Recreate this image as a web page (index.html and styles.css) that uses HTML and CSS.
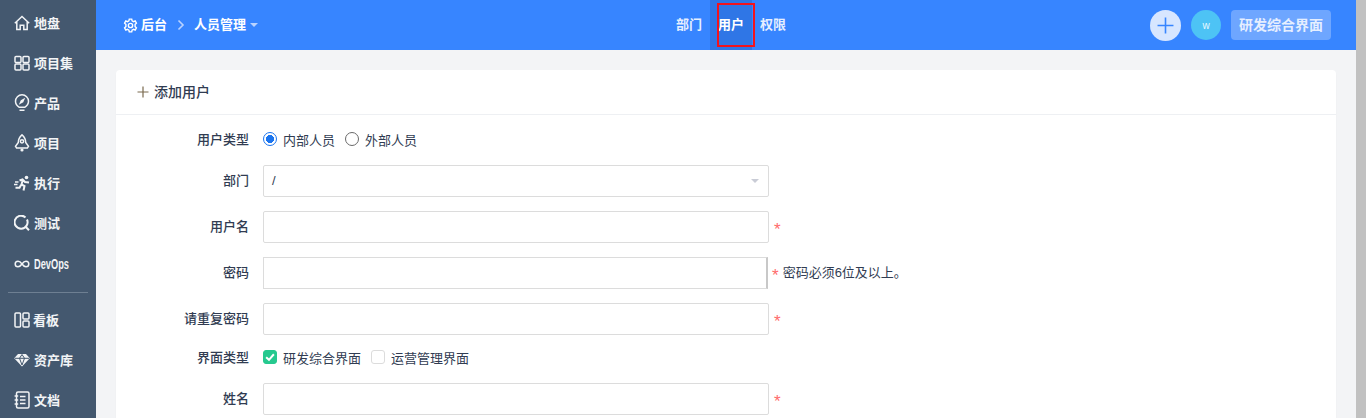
FILE: index.html
```html
<!DOCTYPE html>
<html lang="zh">
<head>
<meta charset="utf-8">
<title>添加用户</title>
<link rel="stylesheet" href="styles.css">
</head>
<body>
<div class="app">
  <aside class="side">
    <a class="nav"><svg viewBox="0 0 16 16"><path d="M.8 8.200 8 1.500 15.200 8.200M2.800 6.500V14.500H6.200V10.200H9.800V14.500H13.200V6.500"/></svg><span>地盘</span></a>
    <a class="nav"><svg viewBox="0 0 16 16"><rect x="1" y="1.500" width="6" height="6" rx="1"/><rect x="9" y="1.500" width="6" height="6" rx="1"/><rect x="1" y="9" width="6" height="6" rx="1"/><rect x="9" y="9" width="6" height="6" rx="1"/></svg><span>项目集</span></a>
    <a class="nav"><svg class="tall" viewBox="0 0 16 18"><path d="M5.300 13.300C3.100 12 1.500 10 1.500 7.300a6.500 6.500 0 0 1 13 0c0 2.700-1.600 4.700-3.800 6ZM5.500 16.300H10.500"/><path class="fill" d="M11.200 3.800 6.800 6.200 4.800 10.800 9.300 8.300Z"/></svg><span>产品</span></a>
    <a class="nav"><svg class="tall" viewBox="0 0 16 18"><path d="M8 .8C5.300 3 4.300 5.800 4.300 8.500L1.500 12.300 2.600 14H13.400L14.500 12.300 11.700 8.500C11.700 5.800 10.700 3 8 .8Z"/><circle cx="8" cy="7.300" r="1.600"/><circle class="fill" cx="8" cy="16" r="1.600"/></svg><span>项目</span></a>
    <a class="nav"><svg viewBox="0 0 16 16"><circle class="fill" cx="12.500" cy="2.500" r="1.800"/><path class="heavy" d="M5.500 5.500 8.500 4.500 11 7 15 7.500M8.800 5 7.500 9.500 10.500 11 9.500 15.500M7 10 5.500 12.800H1.500"/><path d="M1 7H4.500M0 9.500H3.500"/></svg><span>执行</span></a>
    <a class="nav"><svg viewBox="0 0 16 16"><path class="heavy" d="M11.500 2.400A6.500 6.500 0 1 0 13 4.500M11.600 11.800 15 15.300"/></svg><span>测试</span></a>
    <a class="nav nav-dev"><svg viewBox="0 0 16 16"><path d="M8 8C6.500 5.800 5.500 5.200 4 5.200a2.800 2.800 0 0 0 0 5.600c1.500 0 2.500-.6 4-2.800 1.500-2.200 2.500-2.800 4-2.800a2.800 2.800 0 0 1 0 5.600C10.500 10.800 9.500 10.200 8 8Z"/></svg><span class="dev">DevOps</span></a>
    <div class="rule"></div>
    <a class="nav nav-tight"><svg viewBox="0 0 16 16"><rect x="1" y="1" width="5.500" height="14" rx="1"/><rect x="9" y="1" width="6" height="6" rx="1"/><rect x="9" y="9" width="6" height="6" rx="1"/></svg><span>看板</span></a>
    <a class="nav"><svg viewBox="0 0 16 16"><path class="fill" d="M4 2H12L15.800 6.300 8 14.500.2 6.300Z"/><path class="cut" d="M1 6.300H15M5.500 6.300 8 13 10.500 6.300 8 2.500 5.500 6.300"/></svg><span>资产库</span></a>
    <a class="nav"><svg class="tall" viewBox="0 0 16 18"><rect x="2.500" y="1" width="12.500" height="16" rx="1.500"/><path d="M6 5.500H11.500M6 9H11.500M6 12.500H11.500M.6 5H4.200M.6 9H4.200M.6 13H4.200"/></svg><span>文档</span></a>
  </aside>
  <div class="main">
    <header class="top">
      <div class="crumbs">
        <svg class="gear" viewBox="0 0 16 16"><path d="M6.700 1.200H9.300L9.700 3.100 11.200 3.900 13 3.200 14.300 5.500 12.900 6.800V9.200L14.300 10.500 13 12.800 11.200 12.100 9.700 12.900 9.300 14.800H6.700L6.300 12.900 4.800 12.100 3 12.800 1.700 10.500 3.100 9.200V6.800L1.700 5.500 3 3.200 4.800 3.900 6.300 3.100Z"/><circle cx="8" cy="8" r="2.300"/></svg>
        <span class="crumb">后台</span>
        <svg class="chev" viewBox="0 0 8 12"><path d="M1.500 1.500 6 6 1.500 10.500"/></svg>
        <span class="crumb">人员管理</span>
        <i class="caret"></i>
      </div>
      <nav class="tabs">
        <a class="tab">部门</a>
        <a class="tab tab-on">用户</a>
        <a class="tab">权限</a>
      </nav>
      <div class="tools">
        <span class="add"><svg viewBox="0 0 16 16"><path d="M8 .5V15.500M.5 8H15.500"/></svg></span>
        <span class="avatar">w</span>
        <span class="mode">研发综合界面</span>
      </div>
    </header>
    <section class="content">
      <div class="card">
        <h2 class="card-head"><svg viewBox="0 0 12 12"><path d="M6 .5V11.500M.5 6H11.500"/></svg><span>添加用户</span></h2>
        <form class="form">
          <div class="row row-choice">
            <label class="lbl">用户类型</label>
            <span class="opt"><i class="radio radio-on"></i>内部人员</span>
            <span class="opt"><i class="radio"></i>外部人员</span>
          </div>
          <div class="row">
            <label class="lbl">部门</label>
            <div class="box select"><span class="val">/</span><i class="sel-caret"></i></div>
          </div>
          <div class="row">
            <label class="lbl">用户名</label>
            <div class="box"></div><span class="star">*</span>
          </div>
          <div class="row">
            <label class="lbl">密码</label>
            <div class="box box-pw"></div><span class="star star-pw">*</span><span class="hint">密码必须6位及以上。</span>
          </div>
          <div class="row">
            <label class="lbl">请重复密码</label>
            <div class="box"></div><span class="star">*</span>
          </div>
          <div class="row row-choice row-after">
            <label class="lbl">界面类型</label>
            <span class="opt"><i class="check check-on"><svg viewBox="0 0 14 14"><path d="M2.500 7.200 5.800 10.300 11.500 3.800"/></svg></i>研发综合界面</span>
            <span class="opt"><i class="check"></i>运营管理界面</span>
          </div>
          <div class="row">
            <label class="lbl">姓名</label>
            <div class="box"></div><span class="star">*</span>
          </div>
        </form>
      </div>
    </section>
  </div>
  <div class="scrollbar"></div>
</div>
</body>
</html>
```
FILE: styles.css
```css
* { box-sizing: border-box; }
html, body { margin: 0; height: 100%; overflow: hidden; }
body {
  font-family: "Liberation Sans", "Noto Sans CJK SC", sans-serif;
  font-size: 13px;
  color: #313c52;
}
.app { display: flex; width: 1366px; height: 418px; overflow: hidden; }

.side {
  flex: 0 0 96px;
  background: #44586f;
  display: flex;
  flex-direction: column;
  padding: 3px 0 0 14px;
  color: #fff;
}
.nav {
  display: flex;
  align-items: center;
  height: 40px;
  gap: 4px;
  font-weight: 700;
  color: #f2f4f6;
  flex: none;
}
.nav span { padding-bottom: 2px; }
.nav svg { width: 16px; height: 16px; fill: none; stroke: #f2f4f6; stroke-width: 1.500; flex: none; }
.nav svg.tall { height: 18px; }
.nav svg .fill { fill: #f2f4f6; stroke: none; }
.nav svg .heavy { stroke-width: 2; }
.nav svg .cut { stroke: #44586f; stroke-width: 1; }
.nav-dev { height: 41px; }
.nav-tight { gap: 3px; }
.nav .dev { font-size: 14px; padding: 0; transform: scaleX(.66); transform-origin: left; }
.rule { flex: none; height: 1px; background: #6e7f92; width: 80px; margin: 8px 0 7px -6px; }

.main { flex: 1; min-width: 0; display: flex; flex-direction: column; background: #f3f4f6; }
.top {
  flex: 0 0 50px;
  background: #3785ff;
  display: grid;
  grid-template-columns: 1fr auto 1fr;
  align-items: center;
  padding: 0 25px 0 27px;
  color: #fff;
}
.crumbs { display: flex; align-items: center; font-weight: 700; }
.crumb { padding-bottom: 3px; }
.gear { width: 15px; height: 15px; fill: none; stroke: #fff; stroke-width: 1.500; margin-right: 3px; }
.chev { width: 8px; height: 12px; fill: none; stroke: #b9d3ff; stroke-width: 1.600; margin: 0 9px 0 10px; }
.caret { border: 4px solid transparent; border-top-color: #b9d3ff; border-bottom: 0; margin-left: 4px; }
.tabs { display: flex; justify-self: center; height: 50px; margin-left: 8px; }
.tab { display: flex; align-items: center; padding: 0 8px 3px; font-weight: 700; color: #e6efff; }
.tab-on { position: relative; background: #2f76e6; color: #fff; }
.tab-on::after { content: ""; box-sizing: border-box; position: absolute; left: 7px; top: 3px; width: 38px; height: 44px; border: 2px solid #f3131d; }
.tools { display: flex; align-items: center; justify-content: flex-end; }
.add { width: 31px; height: 31px; border-radius: 50%; background: #d7e6ff; display: flex; align-items: center; justify-content: center; }
.add svg { width: 17px; height: 17px; stroke: #3785ff; stroke-width: 1.500; fill: none; }
.avatar { width: 30px; height: 30px; border-radius: 50%; background: #4dc3f5; margin: 0 10px; display: flex; align-items: center; justify-content: center; font-size: 10px; color: #e8f8ff; }
.mode { height: 30px; padding: 0 8px 2px; border-radius: 4px; background: #6ea6ff; font-size: 14px; font-weight: 700; color: #e6efff; display: flex; align-items: center; }

.content { flex: 1; padding: 20px 20px 0; min-height: 0; overflow: hidden; }
.card { background: #fff; border-radius: 4px 4px 0 0; height: 100%; box-shadow: 0 1px 2px rgba(0,0,0,.03); }
.card-head {
  margin: 0;
  height: 45px;
  display: flex;
  align-items: center;
  padding-left: 21px;
  font-size: 14px;
  font-weight: 500;
  color: #313c52;
  border-bottom: 1px solid #eef0f3;
  gap: 5px;
}
.card-head span { padding-bottom: 3px; }
.card-head svg { width: 12px; height: 12px; stroke: #7a6a4f; stroke-width: 1.200; fill: none; }
.form { display: flex; flex-direction: column; padding-top: 14px; gap: 14px; }
.row { display: flex; align-items: center; height: 32px; flex: none; }
.row-choice { height: 22px; }
.row-after { margin-top: -2px; }
.lbl { width: 133px; text-align: right; font-weight: 500; margin-right: 14px; flex: none; padding-bottom: 4px; }
.box { width: 506px; height: 32px; border: 1px solid #dcdcdc; border-radius: 2px; background: #fff; flex: none; }
.box-pw { width: 505px; border-right: 2px solid #c8c8c8; border-radius: 0; }
.select { display: flex; align-items: center; justify-content: space-between; padding: 0 8px; }
.val { padding-bottom: 2px; }
.sel-caret { border: 4px solid transparent; border-top-color: #c9ccd6; border-bottom: 0; margin-right: 1px; }
.star { color: #ff6b6b; font-size: 17px; margin-left: 5px; line-height: 1; padding-top: 4px; }
.star-pw { margin-left: 4px; }
.hint { margin-left: 4px; color: #313c52; padding-bottom: 4px; }
.opt { display: flex; align-items: center; gap: 6px; margin-right: 10px; color: #313c52; padding-bottom: 2px; }
.radio { width: 14px; height: 14px; border-radius: 50%; border: 1px solid #6a6a6a; background: #fff; flex: none; }
.radio-on { border: 1.500px solid #1b74ee; background: radial-gradient(circle, #1b74ee 0 3.800px, #fff 4.300px); }
.check { width: 14px; height: 14px; border-radius: 3px; border: 1px solid #dcdcdc; background: #fff; flex: none; display: block; }
.check-on { background: #26c98f; border-color: #26c98f; }
.check-on svg { display: block; width: 12px; height: 12px; fill: none; stroke: #fff; stroke-width: 2.300; }

.scrollbar { flex: 0 0 10px; background: #c1c1c1; }
```
